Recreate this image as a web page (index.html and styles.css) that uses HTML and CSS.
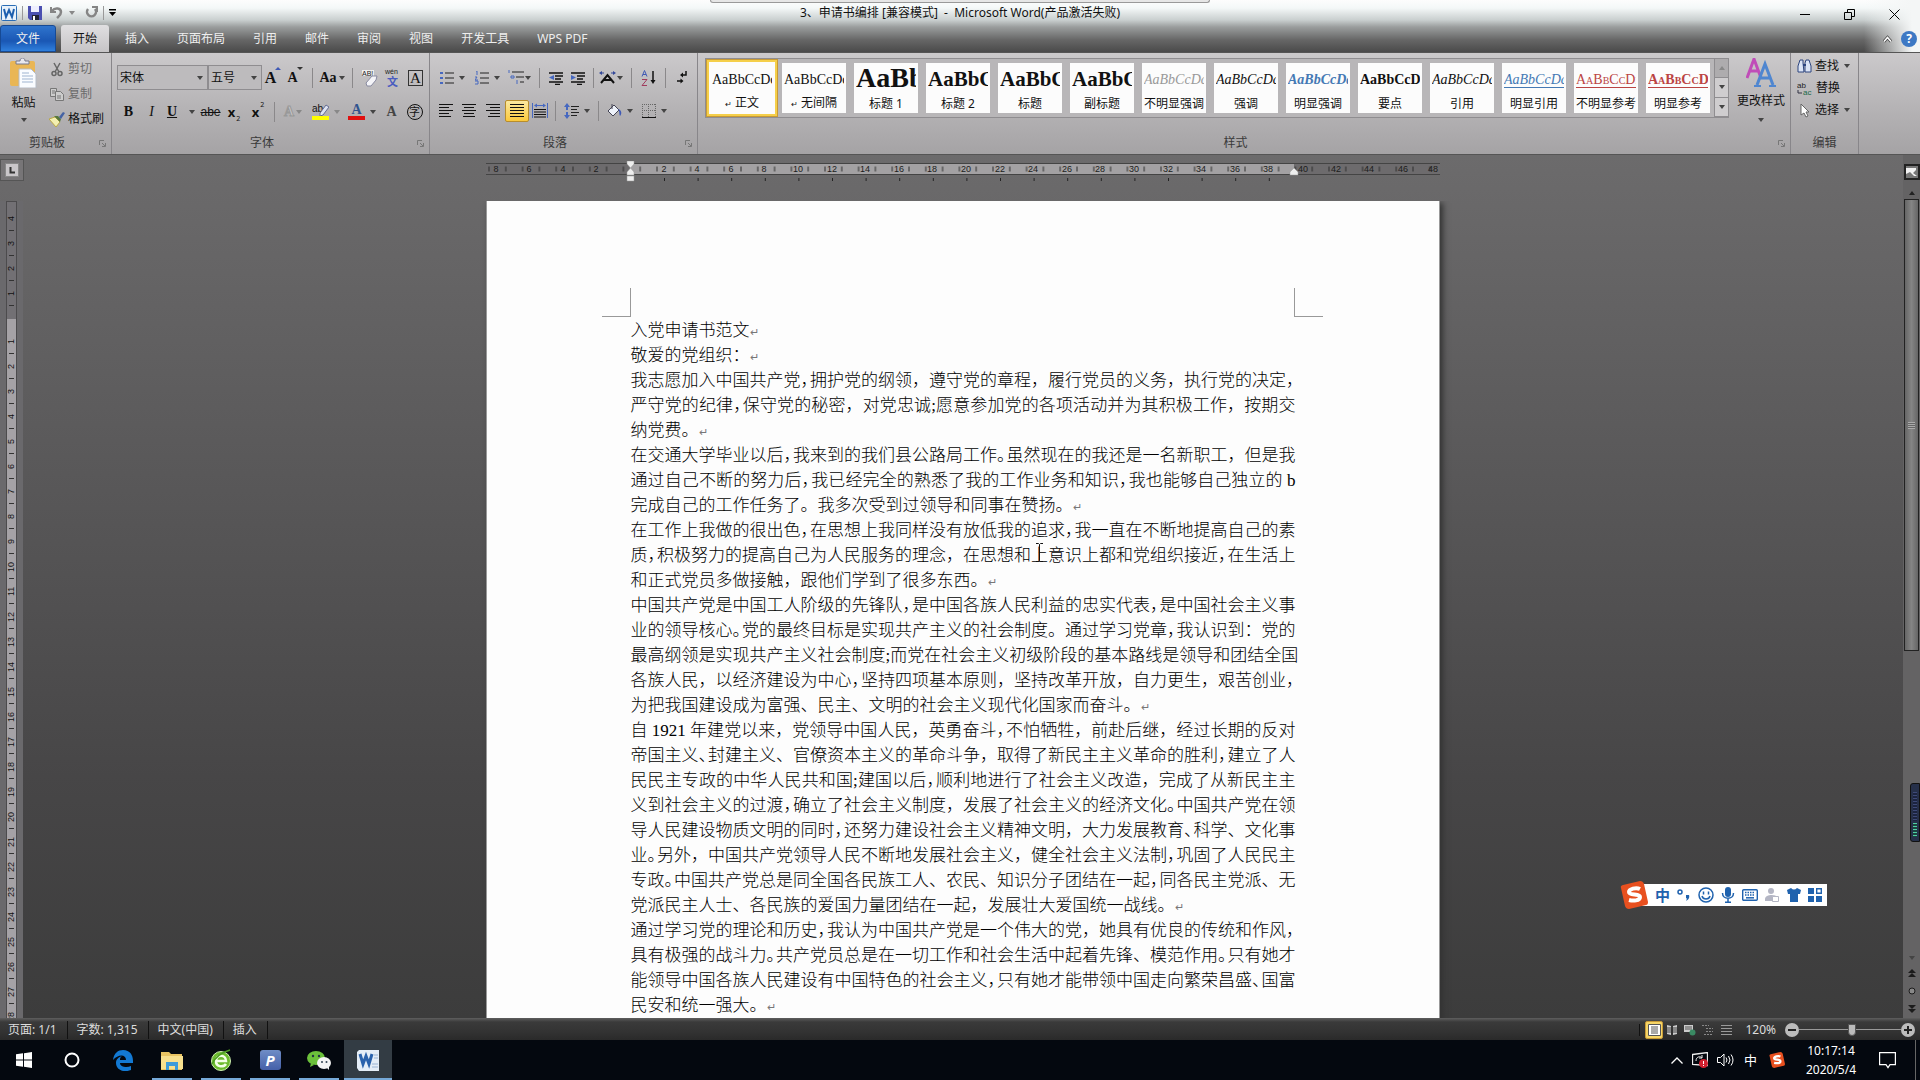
FILE: index.html
```html
<!DOCTYPE html>
<html lang="zh-CN">
<head>
<meta charset="utf-8">
<title>3、申请书编排 [兼容模式] - Microsoft Word</title>
<link rel="stylesheet" href="styles.css">
</head>
<body>
<div class="desktop">
<header class="top">
  <div class="shelf"></div>
  <div class="titlebar">
    <div class="quick">
      <svg width="16" height="16" viewBox="0 0 16 16"><rect x=".5" y=".5" width="15" height="15" rx="1" fill="#e8f2fb" stroke="#2a6db5"/><path d="M3 4l2 8 3-7 3 7 2-8" fill="none" stroke="#1d5fae" stroke-width="2"/></svg>
      <span class="qsep"></span>
      <button aria-label="保存"><svg width="14" height="14" viewBox="0 0 14 14"><path d="M0 0h14v14H2l-2-2z" fill="#4a4fb0"/><path d="M3 0h8v6H3z" fill="#eef"/><path d="M4 9h7v5H4z" fill="#223"/><path d="M5 10h2v4H5z" fill="#fff"/></svg></button>
      <button aria-label="撤消"><svg width="13" height="13" viewBox="0 0 13 13"><path d="M1 1v5h5" fill="none" stroke="#858585" stroke-width="2"/><path d="M2 5c3-4 9-3 9 1 0 3-2 4-4 6" fill="none" stroke="#858585" stroke-width="2.5"/></svg></button>
      <span class="caret dim"></span>
      <button aria-label="重复"><svg width="13" height="13" viewBox="0 0 13 13"><path d="M3 3a4.500 4.500 0 1 0 7 0" fill="none" stroke="#858585" stroke-width="2.500"/><path d="M7 1h5v5" fill="none" stroke="#858585" stroke-width="2"/></svg></button>
      <span class="qsep"></span>
      <button aria-label="自定义快速访问工具栏"><svg width="7" height="7" viewBox="0 0 7 7"><path d="M0 0h7v1.500H0zM0 3h7L3.500 7z" fill="#000"/></svg></button>
    </div>
    <h1 class="title">3、申请书编排 [兼容模式] &nbsp;- &nbsp;Microsoft Word(产品激活失败)</h1>
    <div class="winbtns">
      <button aria-label="最小化"><svg width="10" height="10" viewBox="0 0 10 10"><path d="M0 5.500h10" stroke="#000"/></svg></button>
      <button aria-label="还原"><svg width="11" height="11" viewBox="0 0 11 11"><path d="M.5 3.500h7v7h-7zM3.500 3.500v-3h7v7h-3" fill="none" stroke="#000"/></svg></button>
      <button aria-label="关闭"><svg width="11" height="11" viewBox="0 0 11 11"><path d="M.5.5l10 10M10.500.5l-10 10" stroke="#000"/></svg></button>
    </div>
  </div>
  <nav class="tabs">
    <button class="tab file">文件</button>
    <button class="tab on">开始</button>
    <button class="tab">插入</button>
    <button class="tab">页面布局</button>
    <button class="tab">引用</button>
    <button class="tab">邮件</button>
    <button class="tab">审阅</button>
    <button class="tab">视图</button>
    <button class="tab">开发工具</button>
    <button class="tab">WPS PDF</button>
    <span class="grow"></span>
    <button class="mini" aria-label="折叠功能区"><svg width="9" height="8" viewBox="0 0 9 8"><path d="M1 6.500L4.500 2.500 8 6.500" fill="none" stroke="#444" stroke-width="3"/><path d="M1 6.500L4.500 2.500 8 6.500" fill="none" stroke="#fff" stroke-width="1.500"/></svg></button>
    <button class="help" aria-label="帮助">?</button>
  </nav>
</header>

<section class="ribbon">
  <div class="group clip">
    <div class="gbody">
      <button class="paste"><svg width="27" height="30" viewBox="0 0 27 30"><rect x="0" y="3" width="25" height="25" rx="2" fill="#e9b655"/><path d="M6 6V3h4c0-4 5-4 5 0h4v3z" fill="#e8e8ee" stroke="#77788c"/><path d="M9 11h12l5 5v14H9z" fill="#fafcff" stroke="#b6bcc6"/><path d="M12 15h7M12 18h11M12 21h11M12 24h11" stroke="#9fb4d0"/></svg><span>粘贴</span><i class="caret"></i></button>
      <div class="stack">
        <button class="sm off"><svg width="16" height="16" viewBox="0 0 16 16"><path d="M5 2l5 9M11 2l-5 9" stroke="#666" stroke-width="1.500"/><circle cx="5" cy="12.500" r="2" fill="none" stroke="#666" stroke-width="1.500"/><circle cx="11" cy="12.500" r="2" fill="none" stroke="#666" stroke-width="1.500"/></svg>剪切</button>
        <button class="sm off"><svg width="16" height="16" viewBox="0 0 16 16"><path d="M1.500 2.500h6v8h-6z" fill="#ccc" stroke="#777"/><path d="M6.500 5.500h5l3 3v6h-8z" fill="#ccc" stroke="#777"/><path d="M8 10h4M8 12h4M3 5h3M3 7h3" stroke="#777"/></svg>复制</button>
        <button class="sm"><svg width="16" height="16" viewBox="0 0 16 16"><path d="M0 8l6-2 5 5-4 5z" fill="#f3efb0" stroke="#b9a947"/><path d="M5 5l6 6 1-3-3-3z" fill="#58783f"/><path d="M10 6l4-5 2 1-4 6z" fill="#4462a4"/></svg>格式刷</button>
      </div>
    </div>
    <div class="glabel"><span>剪贴板</span><svg class="launch" width="7" height="7" viewBox="0 0 7 7"><path d="M.5 5V.5H5M3 3l3 3M6.500 3v3.500H3" fill="none" stroke="#777"/></svg></div>
  </div>

  <div class="group font">
    <div class="gbody rows">
      <div class="row">
        <label class="combo wide"><input type="text" value="宋体" aria-label="字体"><i class="caret"></i></label>
        <label class="combo"><input type="text" value="五号" aria-label="字号"><i class="caret"></i></label>
        <button class="tb w22 ser big" aria-label="增大字体">A<sup class="up"></sup></button>
        <button class="tb w22 ser" aria-label="缩小字体">A<sup class="dn"></sup></button>
        <span class="sep"></span>
        <button class="tb w28 ser">Aa<i class="caret"></i></button>
        <span class="sep"></span>
        <button class="tb w23" aria-label="清除格式"><svg width="17" height="18" viewBox="0 0 17 18"><path d="M1 1h12v6H1z" fill="#eee"/><text x="1" y="7" font-family="Liberation Sans" font-size="7" fill="#222">AB!</text><path d="M5 14l6-7h5l-1 4-5 6H6z" fill="#f4f4f8" stroke="#888aa0"/></svg></button>
        <button class="tb w23" aria-label="拼音指南"><svg width="17" height="19" viewBox="0 0 17 19"><text x="1" y="6" font-family="Liberation Sans" font-size="7" fill="#222">wén</text><text x="3" y="18" font-family="Noto Sans CJK SC" font-size="11" font-weight="700" fill="#4a5cc0">文</text></svg></button>
        <button class="tb w23" aria-label="字符边框"><span class="boxa">A</span></button>
      </div>
      <div class="row r2">
        <button class="tb w23 ser">B</button>
        <button class="tb w23 ser ital">I</button>
        <button class="tb w36 ser"><u>U</u><i class="caret"></i></button>
        <button class="tb w23 strike">abe</button>
        <button class="tb w24 bold">x<sub>2</sub></button>
        <button class="tb w24 bold">x<sup>2</sup></button>
        <span class="sep s8"></span>
        <button class="tb w30 ser ghost">A<i class="caret dim"></i></button>
        <button class="tb w36" aria-label="突出显示"><svg width="17" height="17" viewBox="0 0 17 17"><text x="0" y="9" font-family="Liberation Sans" font-size="10" fill="#111">ab</text><path d="M8 10l6-8 3 2-6 8-3 1z" fill="#dde3f2" stroke="#666c90"/><path d="M0 13h17v4H0z" fill="#ff0"/></svg><i class="caret dim"></i></button>
        <button class="tb w36" aria-label="字体颜色"><span class="fcolor">A</span><i class="caret"></i></button>
        <button class="tb w23 ser grey">A</button>
        <button class="tb w23"><span class="circ">字</span></button>
      </div>
    </div>
    <div class="glabel"><span>字体</span><svg class="launch" width="7" height="7" viewBox="0 0 7 7"><path d="M.5 5V.5H5M3 3l3 3M6.500 3v3.500H3" fill="none" stroke="#777"/></svg></div>
  </div>

  <div class="group para">
    <div class="gbody rows">
      <div class="row">
        <button class="tb w35" aria-label="项目符号"><svg width="14" height="14" viewBox="0 0 14 14"><path d="M0 1h3v2H0zM0 6h3v2H0zM0 11h3v2H0z" fill="#4668c0"/><path d="M5 2h9M5 7h9M5 12h9" stroke="#222"/></svg><i class="caret"></i></button>
        <button class="tb w35" aria-label="编号"><svg width="14" height="14" viewBox="0 0 14 14"><path d="M1 0h1v4M0 6h2l-2 3h3M0 10h3v3H0" fill="none" stroke="#4668c0"/><path d="M5 2h9M5 7h9M5 12h9" stroke="#222"/></svg><i class="caret"></i></button>
        <button class="tb w28 snug" aria-label="多级列表"><svg width="16" height="15" viewBox="0 0 16 15"><path d="M1 0v3M3 6h3v2H3zM9 10v4" fill="none" stroke="#4668c0"/><path d="M4 2h12M8 7h8M12 12h4" stroke="#222"/></svg><i class="caret"></i></button>
        <span class="sep"></span>
        <button class="tb w22" aria-label="减少缩进"><svg width="14" height="14" viewBox="0 0 14 14"><path d="M0 2h14M6 5h8M6 8h6M0 11h14M6 13.500h5" stroke="#111" stroke-width="1.500"/><path d="M5 4v5L0 6.500z" fill="#4668c0"/></svg></button>
        <button class="tb w22" aria-label="增加缩进"><svg width="14" height="14" viewBox="0 0 14 14"><path d="M0 2h14M6 5h8M6 8h6M0 11h14M6 13.500h5" stroke="#111" stroke-width="1.500"/><path d="M0 4v5l5-2.500z" fill="#4668c0"/></svg></button>
        <span class="sep s8"></span>
        <button class="tb w28 snug" aria-label="中文版式"><svg width="17" height="14" viewBox="0 0 17 14"><path d="M2 12l6.500-8L15 12M5 9h7" fill="none" stroke="#111" stroke-width="2"/><path d="M0 2l3-2v1.500h2v1H3V4zM17 2l-3-2v1.500h-2v1h2V4z" fill="#33489a"/></svg><i class="caret"></i></button>
        <span class="sep"></span>
        <button class="tb w22" aria-label="排序"><svg width="15" height="16" viewBox="0 0 15 16"><path d="M1 6.500L3.500.5 6 6.500M2 4.500h3" fill="none" stroke="#3f59b5"/><path d="M1 9.500h5l-5 6h5" fill="none" stroke="#a03a5c"/><path d="M12 1v11" stroke="#111" stroke-width="1.500"/><path d="M9.500 10h5L12 14z" fill="#111"/></svg></button>
        <span class="sep"></span>
        <button class="tb w22" aria-label="显示编辑标记"><svg width="10" height="13" viewBox="0 0 10 13"><path d="M9 0v4H5M0 10h4" fill="none" stroke="#111" stroke-width="1.500"/><path d="M6 1.500v5L3 4zM3.500 7.500v5l3-2.500z" fill="#111"/></svg></button>
      </div>
      <div class="row r3">
        <button class="tb w22" aria-label="左对齐"><svg width="14" height="13" viewBox="0 0 14 13"><path d="M0 .5h14M0 3.500h10M0 6.500h14M0 9.500h10M0 12.500h12" stroke="#111"/></svg></button>
        <button class="tb w24" aria-label="居中"><svg width="14" height="13" viewBox="0 0 14 13"><path d="M0 .5h14M2 3.500h10M0 6.500h14M2 9.500h10M1 12.500h12" stroke="#111"/></svg></button>
        <button class="tb w24" aria-label="右对齐"><svg width="14" height="13" viewBox="0 0 14 13"><path d="M0 .5h14M4 3.500h10M0 6.500h14M4 9.500h10M2 12.500h12" stroke="#111"/></svg></button>
        <button class="tb w24 hot" aria-label="两端对齐"><svg width="14" height="13" viewBox="0 0 14 13"><path d="M0 .5h14M0 3.500h14M0 6.500h14M0 9.500h14M0 12.500h14" stroke="#111"/></svg></button>
        <button class="tb w22" aria-label="分散对齐"><svg width="16" height="15" viewBox="0 0 16 15"><path d="M.5 0v15M15.500 0v15M3 2.500h10" stroke="#4668c0"/><path d="M5 .5l-3 2 3 2zM11 .5l3 2-3 2z" fill="#4668c0"/><path d="M2 6.500h12M2 9h12M2 11.500h12M2 14h12" stroke="#111"/></svg></button>
        <span class="sep s8"></span>
        <button class="tb w35" aria-label="行距"><svg width="15" height="16" viewBox="0 0 15 16"><path d="M3 0l3 4H4v3H2V4H0zM3 16l3-4H4V9H2v3H0z" fill="#4668c0"/><path d="M7 3.500h8M7 6.500h6M7 9.500h8M7 12.500h6" stroke="#222"/></svg><i class="caret"></i></button>
        <span class="sep s8"></span>
        <button class="tb w35" aria-label="底纹"><svg width="15" height="14" viewBox="0 0 15 14"><path d="M1 7l6-6 5 5-6 6z" fill="#eef2fa" stroke="#445"/><path d="M5 0v5" stroke="#445"/><path d="M11 5c4 1 4 5 2 7-1-2 0-4-2-7z" fill="#3f59b5"/></svg><i class="caret"></i></button>
        <button class="tb w35" aria-label="边框"><svg width="14" height="14" viewBox="0 0 14 14"><path d="M.5 0v13M6.500 0v13M13.500 0v13M0 .5h14M0 6.500h14" stroke="#666" stroke-dasharray="1 1"/><path d="M0 13.500h14" stroke="#111"/></svg><i class="caret"></i></button>
      </div>
    </div>
    <div class="glabel"><span>段落</span><svg class="launch" width="7" height="7" viewBox="0 0 7 7"><path d="M.5 5V.5H5M3 3l3 3M6.500 3v3.500H3" fill="none" stroke="#777"/></svg></div>
  </div>

  <div class="group styles">
    <div class="gbody">
      <div class="gallery">
        <button class="style sel"><b class="pv">AaBbCcDd</b><span><small>↵</small> 正文</span></button>
        <button class="style"><b class="pv">AaBbCcDd</b><span><small>↵</small> 无间隔</span></button>
        <button class="style"><b class="pv h1">AaBb</b><span>标题 1</span></button>
        <button class="style"><b class="pv h2">AaBbC</b><span>标题 2</span></button>
        <button class="style"><b class="pv h2">AaBbC</b><span>标题</span></button>
        <button class="style"><b class="pv h2">AaBbC</b><span>副标题</span></button>
        <button class="style"><b class="pv it pale">AaBbCcDd</b><span>不明显强调</span></button>
        <button class="style"><b class="pv it">AaBbCcDd</b><span>强调</span></button>
        <button class="style"><b class="pv it blue">AaBbCcDd</b><span>明显强调</span></button>
        <button class="style"><b class="pv strong">AaBbCcD</b><span>要点</span></button>
        <button class="style"><b class="pv it">AaBbCcDd</b><span>引用</span></button>
        <button class="style"><b class="pv it blue line">AaBbCcDd</b><span>明显引用</span></button>
        <button class="style"><b class="pv caps red line">AaBbCcDd</b><span>不明显参考</span></button>
        <button class="style"><b class="pv caps red line strong">AaBbCcDd</b><span>明显参考</span></button>
        <div class="gscroll"><button disabled aria-label="上一行"><i class="caret flip dim"></i></button><button aria-label="下一行"><i class="caret"></i></button><button aria-label="其他"><i class="caret more"></i></button></div>
      </div>
      <button class="change"><svg width="30" height="29" viewBox="0 0 30 29"><path d="M1 20L8 1l7 19M4 13h8" fill="none" stroke="#c04db8" stroke-width="3"/><path d="M11 27l8-21 8 21M14 20h10" fill="none" stroke="#4f86d0" stroke-width="3"/><path d="M8 28h7M23 28h7" stroke="#4f86d0" stroke-width="2"/></svg><span>更改样式</span><i class="caret"></i></button>
    </div>
    <div class="glabel"><span>样式</span><svg class="launch" width="7" height="7" viewBox="0 0 7 7"><path d="M.5 5V.5H5M3 3l3 3M6.500 3v3.500H3" fill="none" stroke="#777"/></svg></div>
  </div>

  <div class="group edit">
    <div class="gbody stack">
      <button class="sm"><svg width="15" height="14" viewBox="0 0 15 14"><path d="M3 1h3v3l1 9H1V7zM9 1h3l2 6v6H8V4z" fill="#dbe4f5" stroke="#2c447e"/><path d="M6 6h3" stroke="#2c447e" stroke-width="2"/></svg>查找<i class="caret"></i></button>
      <button class="sm"><svg width="16" height="15" viewBox="0 0 16 15"><text x="0" y="7" font-family="Liberation Sans" font-size="8" fill="#222">ab</text><text x="6" y="14" font-family="Liberation Sans" font-size="8" fill="#1a6a4a">ac</text><path d="M1 9v3h4" fill="none" stroke="#334"/></svg>替换</button>
      <button class="sm"><svg width="15" height="15" viewBox="0 0 15 15"><path d="M4 1v11l3-2 2 4 2-1-2-4h3z" fill="#fff" stroke="#666"/></svg>选择<i class="caret"></i></button>
    </div>
    <div class="glabel"><span>编辑</span></div>
  </div>
</section>

<main class="work">
  <button class="tabsel" aria-label="制表符"><svg width="14" height="14" viewBox="0 0 14 14"><path d="M.5.5h13v13H.5z" fill="#c9c6c9" stroke="#888"/><path d="M5.500 4v5.500H10" fill="none" stroke="#333" stroke-width="2"/></svg></button>
  <div class="hruler">
    <svg width="954" height="22" viewBox="0 0 954 22">
      <defs><pattern id="ticks" x="2" y="0" width="16.800" height="12" patternUnits="userSpaceOnUse"><path d="M1 3.500v5" stroke="#2c2c2c"/></pattern>
      <pattern id="marks" x="10" y="0" width="33.600" height="22" patternUnits="userSpaceOnUse"><path d="M.5 17v3" stroke="#222"/></pattern></defs>
      <path d="M0 2h954v12H0z" fill="#6d6b6d"/><path d="M144 2h664v12H144z" fill="#a3a1a3"/>
      <path d="M0 2.500h954M0 13.500h954" stroke="#444"/>
      <g transform="translate(0 2)"><path d="M0 0h954v12H0z" fill="url(#ticks)"/></g>
      <path d="M170 16h620v5H170z" fill="url(#marks)"/>
      <g class="rnum"><text x="10" y="11">8</text><text x="43" y="11">6</text><text x="77" y="11">4</text><text x="110" y="11">2</text><text x="178" y="11">2</text><text x="211" y="11">4</text><text x="245" y="11">6</text><text x="278" y="11">8</text><text x="312" y="11">10</text><text x="346" y="11">12</text><text x="379" y="11">14</text><text x="413" y="11">16</text><text x="446" y="11">18</text><text x="480" y="11">20</text><text x="514" y="11">22</text><text x="547" y="11">24</text><text x="581" y="11">26</text><text x="614" y="11">28</text><text x="648" y="11">30</text><text x="682" y="11">32</text><text x="715" y="11">34</text><text x="749" y="11">36</text><text x="782" y="11">38</text><text x="817" y="11">40</text><text x="850" y="11">42</text><text x="883" y="11">44</text><text x="917" y="11">46</text><text x="947" y="11">48</text></g>
      <path d="M141 0h7v3l-3.500 4-3.500-4zM141 14v-3l3.500-4 3.500 4v3zM141 15h7v5h-7zM804 14v-3l4-4 4 4v3z" fill="#eee" stroke="#999" stroke-width=".5"/>
    </svg>
  </div>
  <div class="vruler">
    <div class="vtop"><span>4</span><span>3</span><span>2</span><span>1</span></div>
    <div class="vmain"><span>1</span><span>2</span><span>3</span><span>4</span><span>5</span><span>6</span><span>7</span><span>8</span><span>9</span><span>10</span><span>11</span><span>12</span><span>13</span><span>14</span><span>15</span><span>16</span><span>17</span><span>18</span><span>19</span><span>20</span><span>21</span><span>22</span><span>23</span><span>24</span><span>25</span><span>26</span><span>27</span><span>28</span></div>
  </div>
  <div class="canvas">
    <article class="page">
      <div class="corners"><span class="corner"></span><span class="corner r"></span></div>
      <div class="text">
        <p><span class="end">入党申请书范文</span></p>
        <p><span class="end">敬爱的党组织：</span></p>
        <p><span>我志愿加入中国共产党<em>，</em>拥护党的纲领，遵守党的章程，履行党员的义务，执行党的决定<em>，</em></span>
        <span>严守党的纪律<em>，</em>保守党的秘密，对党忠诚;愿意参加党的各项活动并为其积极工作，按期交</span>
        <span class="end">纳党费。</span></p>
        <p><span>在交通大学毕业以后<em>，</em>我来到的我们县公路局工作<em>。</em>虽然现在的我还是一名新职工，但是我</span>
        <span>通过自己不断的努力后<em>，</em>我已经完全的熟悉了我的工作业务和知识<em>，</em>我也能够自己独立的 <b>b</b></span>
        <span class="end">完成自己的工作任务了。我多次受到过领导和同事在赞扬。</span></p>
        <p><span>在工作上我做的很出色<em>，</em>在思想上我同样没有放低我的追求<em>，</em>我一直在不断地提高自己的素</span>
        <span>质<em>，</em>积极努力的提高自己为人民服务的理念，在思想和上意识上都和党组织接近<em>，</em>在生活上</span>
        <span class="end">和正式党员多做接触，跟他们学到了很多东西。</span></p>
        <p><span>中国共产党是中国工人阶级的先锋队<em>，</em>是中国各族人民利益的忠实代表<em>，</em>是中国社会主义事</span>
        <span>业的领导核心<em>。</em>党的最终目标是实现共产主义的社会制度。通过学习党章<em>，</em>我认识到：党的</span>
        <span>最高纲领是实现共产主义社会制度;而党在社会主义初级阶段的基本路线是领导和团结全国</span>
        <span>各族人民，以经济建设为中心<em>，</em>坚持四项基本原则，坚持改革开放，自力更生，艰苦创业<em>，</em></span>
        <span class="end">为把我国建设成为富强、民主、文明的社会主义现代化国家而奋斗。</span></p>
        <p><span>自 <b>1921</b> 年建党以来，党领导中国人民，英勇奋斗<em>，</em>不怕牺牲，前赴后继，经过长期的反对</span>
        <span>帝国主义<em>、</em>封建主义、官僚资本主义的革命斗争，取得了新民主主义革命的胜利<em>，</em>建立了人</span>
        <span>民民主专政的中华人民共和国;建国以后<em>，</em>顺利地进行了社会主义改造，完成了从新民主主</span>
        <span>义到社会主义的过渡<em>，</em>确立了社会主义制度，发展了社会主义的经济文化<em>。</em>中国共产党在领</span>
        <span>导人民建设物质文明的同时<em>，</em>还努力建设社会主义精神文明，大力发展教育<em>、</em>科学、文化事</span>
        <span>业<em>。</em>另外，中国共产党领导人民不断地发展社会主义，健全社会主义法制<em>，</em>巩固了人民民主</span>
        <span>专政<em>。</em>中国共产党总是同全国各民族工人、农民、知识分子团结在一起<em>，</em>同各民主党派、无</span>
        <span class="end">党派民主人士、各民族的爱国力量团结在一起，发展壮大爱国统一战线。</span></p>
        <p><span>通过学习党的理论和历史<em>，</em>我认为中国共产党是一个伟大的党，她具有优良的传统和作风<em>，</em></span>
        <span>具有极强的战斗力<em>。</em>共产党员总是在一切工作和社会生活中起着先锋、模范作用<em>。</em>只有她才</span>
        <span>能领导中国各族人民建设有中国特色的社会主义<em>，</em>只有她才能带领中国走向繁荣昌盛<em>、</em>国富</span>
        <span class="end">民安和统一强大。</span></p>
      </div>
    </article>
    <svg class="ibeam" width="9" height="19" viewBox="0 0 9 19"><path d="M1 .5h2.500l1 1 1-1H8M4.500 1.500v16M1 18.500h2.500l1-1 1 1H8" fill="none" stroke="#111"/></svg>
    <div class="ime">
      <svg class="sogou" width="28" height="28" viewBox="0 0 28 28"><path d="M1 7Q0 5 3 4L20 0q3 0 4 3l4 18q0 3-2 3L9 28q-3 0-4-3z" fill="#e8501f"/><path d="M20 8c-4-2-11 0-11 3 0 4 11 1 11 5 0 4-7 4-11 3" fill="none" stroke="#fff" stroke-width="4"/></svg>
      <span class="zh">中</span>
      <svg width="14" height="14" viewBox="0 0 14 14"><circle cx="3" cy="4" r="2" fill="none" stroke="#1f62ae" stroke-width="1.500"/><path d="M9 7h3c1 3-1 5-3 6 1-2 1-3 0-3z" fill="#1f62ae"/></svg>
      <svg width="16" height="16" viewBox="0 0 16 16"><circle cx="8" cy="8" r="7" fill="none" stroke="#1f62ae" stroke-width="1.500"/><path d="M5.500 4.500v3M10.500 4.500v3M4 9c1 4 7 4 8 0" fill="none" stroke="#1f62ae" stroke-width="1.500"/></svg>
      <svg width="14" height="16" viewBox="0 0 14 16"><rect x="4" y="0" width="6" height="10" rx="3" fill="#1f62ae"/><path d="M1.500 6c0 7 11 7 11 0M7 12v3M4 15.300h6" fill="none" stroke="#1f62ae" stroke-width="1.500"/></svg>
      <svg width="16" height="12" viewBox="0 0 16 12"><rect x=".7" y=".7" width="14.600" height="10.600" rx="1" fill="none" stroke="#1f62ae" stroke-width="1.400"/><path d="M3 3.500h10M3 6h10" stroke="#1f62ae" stroke-width="1.500" stroke-dasharray="1.500 1"/><path d="M4 8.800h8" stroke="#1f62ae" stroke-width="1.500"/></svg>
      <svg width="15" height="16" viewBox="0 0 15 16"><circle cx="6" cy="4" r="3" fill="#b4b6c4"/><path d="M0 12c0-5 11-5 12-2v4H0z" fill="#b4b6c4"/><path d="M7.500 9.500h6v5h-6z" fill="#fff" stroke="#b4b6c4"/></svg>
      <svg width="14" height="14" viewBox="0 0 14 14"><path d="M4 0q3 3 6 0l4 2-1 4h-2v8H3V6H1L0 2z" fill="#1f62ae"/></svg>
      <svg width="14" height="14" viewBox="0 0 14 14"><path d="M0 0h6v6H0zM0 8h6v6H0zM8 8h6v6H8z" fill="#1f62ae"/><path d="M8.700.7h4.600v4.600H8.700z" fill="none" stroke="#1f62ae" stroke-width="1.400"/></svg>
    </div>
  </div>
  <div class="vscroll">
    <button class="rtoggle" aria-label="标尺"><svg width="11" height="8" viewBox="0 0 11 8"><path d="M0 0h10v2L7 5l4 3H8L4 4 0 6z" fill="#f2f2f2"/></svg></button>
    <i class="caret flip"></i>
    <div class="thumb"><i></i></div>
    <span class="grow"></span>
    <i class="caret"></i>
    <svg width="8" height="9" viewBox="0 0 8 9"><path d="M4 0l4 4H0zM4 4l4 4H0z" fill="#1c1c1c"/></svg>
    <svg width="8" height="8" viewBox="0 0 8 8"><circle cx="4" cy="4" r="3" fill="#888" stroke="#1c1c1c"/></svg>
    <svg width="8" height="9" viewBox="0 0 8 9"><path d="M4 5L0 1h8zM4 9L0 5h8z" fill="#1c1c1c"/></svg>
    <div class="meter"><i></i><i class="lit"></i></div>
  </div>
</main>

<footer class="status">
  <button>页面: 1/1</button><button>字数: 1,315</button><button>中文(中国)</button><button>插入</button>
  <span class="grow"></span>
  <span class="vsep"></span>
  <button class="view act" aria-label="页面视图"><svg width="13" height="12" viewBox="0 0 13 12"><path d="M.5.5h12v11H.5z" fill="#fff" stroke="#555"/><path d="M3 3h7M3 5h7M3 7h7M3 9h7" stroke="#555"/></svg></button>
  <button class="view" aria-label="阅读版式"><svg width="12" height="12" viewBox="0 0 12 12"><path d="M1 1l4 1v9l-4-1zM11 1L7 2v9l4-1z" fill="#ccc"/><path d="M1 4h4M1 6h4M1 8h4M7 4h4M7 6h4M7 8h4" stroke="#444"/></svg></button>
  <button class="view" aria-label="Web 版式"><svg width="12" height="12" viewBox="0 0 12 12"><path d="M0 1h9v7H0z" fill="#ccc"/><path d="M1 3h7M1 5h7" stroke="#555"/><circle cx="8.500" cy="8.500" r="3" fill="#3a8a63"/></svg></button>
  <button class="view" aria-label="大纲"><svg width="12" height="12" viewBox="0 0 12 12"><path d="M0 1.500h7M4 4.500h7M4 7.500h7M2 10.500h9" stroke="#888" stroke-dasharray="2 1"/></svg></button>
  <button class="view" aria-label="草稿"><svg width="11" height="12" viewBox="0 0 11 12"><path d="M0 1.500h11M0 4.500h11M0 7.500h11M0 10.500h11" stroke="#999"/></svg></button>
  <button class="zoom">120%</button>
  <button class="round" aria-label="缩小"><svg width="14" height="14" viewBox="0 0 14 14"><circle cx="7" cy="7" r="7" fill="#bbb"/><path d="M3 7h8" stroke="#222" stroke-width="2"/></svg></button>
  <input class="slider" type="range" min="0" max="100" value="52" aria-label="显示比例">
  <button class="round" aria-label="放大"><svg width="14" height="14" viewBox="0 0 14 14"><circle cx="7" cy="7" r="7" fill="#bbb"/><path d="M3 7h8M7 3v8" stroke="#222" stroke-width="2"/></svg></button>
</footer>

<nav class="taskbar">
  <button class="task" aria-label="开始菜单"><svg width="16" height="16" viewBox="0 0 16 16"><path d="M0 2.300l7-1v6.200H0zM8 1.200L16 0v7.500H8zM0 8.500h7v6.200l-7-1zM8 8.500h8V16l-8-1.200z" fill="#fff"/></svg></button>
  <button class="task" aria-label="Cortana"><svg width="16" height="16" viewBox="0 0 16 16"><circle cx="8" cy="8" r="6.500" fill="none" stroke="#fff" stroke-width="2"/></svg></button>
  <div class="apps">
  <button class="task" aria-label="Edge"><svg width="20" height="21" viewBox="0 0 20 21"><path d="M0 10C1 3 5 0 10 0c7 0 10 5 10 11v2H7c0 4 7 5 11 3v4C11 23 3 20 3 13c0-4 3-6 6-7-2 1-2 3-2 4h6c0-6-8-6-13 0z" fill="#1379d3"/></svg></button>
  <button class="task run" aria-label="资源管理器"><svg width="22" height="19" viewBox="0 0 22 19"><path d="M0 1h8l2 2h11v16H0z" fill="#e9c463"/><path d="M0 5h22v13H0z" fill="#f8e08e"/><path d="M5 19v-8h12v8h-3v-4H8v4z" fill="#3d9bd9"/></svg></button>
  <button class="task run" aria-label="360 浏览器"><svg width="22" height="22" viewBox="0 0 22 22"><circle cx="11" cy="12" r="9.500" fill="#6dbb2e" stroke="#cdeeb0"/><path d="M6 12h10c0-7-10-7-10 0s8 6 10 3" fill="none" stroke="#f4ffe8" stroke-width="2.500"/><path d="M2 15C6 7 13 3 20 1" fill="none" stroke="#4d9d22" stroke-width="1.500"/></svg></button>
  <button class="task run" aria-label="P 应用"><span class="papp">P</span></button>
  <button class="task run" aria-label="微信"><svg width="24" height="19" viewBox="0 0 24 19"><ellipse cx="9" cy="7" rx="9" ry="7" fill="#6cc13b"/><path d="M4 12l-1 4 4-2z" fill="#6cc13b"/><circle cx="6" cy="5" r="1.200" fill="#234"/><circle cx="12" cy="5" r="1.200" fill="#234"/><ellipse cx="17" cy="12" rx="7" ry="6" fill="#f4f4f4"/><path d="M19 16l3 3v-4z" fill="#f4f4f4"/><circle cx="15" cy="11" r="1" fill="#345"/><circle cx="19.500" cy="11" r="1" fill="#345"/></svg></button>
  <button class="task run cur" aria-label="Word"><svg width="22" height="21" viewBox="0 0 22 21"><path d="M2 0h20v21H2L0 18V2z" fill="#e4edf7"/><path d="M3 4l3 10 3-8 3 8 3-10" fill="none" stroke="#2a62ac" stroke-width="3"/><path d="M15 14h6M15 17h6M17 5h4M17 8h4" stroke="#9bb4d4"/></svg></button>
  </div>
  <span class="grow"></span>
  <div class="tray">
    <svg width="12" height="7" viewBox="0 0 12 7"><path d="M.5 6.500L6 1l5.500 5.500" fill="none" stroke="#fff" stroke-width="1.300"/></svg>
    <svg width="16" height="16" viewBox="0 0 16 16"><path d="M.5 2.500L15.500.5v13l-15-1z" fill="none" stroke="#eee" stroke-width="1.300"/><path d="M4 9c0-5 5-5 6-3M10 3v3H7" fill="none" stroke="#eee"/><circle cx="11.500" cy="11.500" r="4.500" fill="#d2202f"/><path d="M11.500 9v3M11.500 13v1" stroke="#fff"/></svg>
    <svg width="17" height="14" viewBox="0 0 17 14"><path d="M.5 4.500h3L7 1v12L3.500 9.500h-3z" fill="none" stroke="#fff"/><path d="M9 4.500q2 2.500 0 5M11.500 3q3 4 0 8M14 1.500q4 5.500 0 11" fill="none" stroke="#fff"/></svg>
    <span class="lang">中</span>
    <svg width="16" height="16" viewBox="0 0 28 28"><path d="M1 7Q0 5 3 4L20 0q3 0 4 3l4 18q0 3-2 3L9 28q-3 0-4-3z" fill="#e8501f"/><path d="M20 8c-4-2-11 0-11 3 0 4 11 1 11 5 0 4-7 4-11 3" fill="none" stroke="#fff" stroke-width="4"/></svg>
  </div>
  <div class="clock"><time>10:17:14</time><time>2020/5/4</time></div>
  <button class="note" aria-label="通知"><svg width="17" height="17" viewBox="0 0 17 17"><path d="M.6.600h15.800v12H11l-2 3-2-3H.6z" fill="none" stroke="#fff" stroke-width="1.200"/></svg></button>
</nav>
</div>
</body>
</html>
```
FILE: styles.css
```css
* { box-sizing: border-box; }
body { margin: 0; font: 12px/16px "Noto Sans", "Noto Sans CJK SC", sans-serif; color: #111; }
button, input { font: inherit; color: inherit; border: 0; padding: 0; margin: 0; background: none; }
button { display: flex; align-items: center; justify-content: center; white-space: nowrap; }
svg { display: block; flex: none; }
.grow { flex: 1; }
.desktop { height: 100vh; display: flex; flex-direction: column; overflow: hidden; }

.caret { width: 0; height: 0; flex: none; border: 3px solid transparent; border-top: 4px solid #444; border-bottom: 0; }
.caret.dim { border-top-color: #888; }
.caret.flip { border-top: 0; border-bottom: 4px solid #222; }
.caret.flip.dim { border-bottom-color: #888; }

/* title bar and tabs */
.top { position: relative; flex: none; background: linear-gradient(90deg, transparent calc(100% - 56px), #f4f6f6 calc(100% - 8px)), linear-gradient(#fdfdfd 0, #f4f8f8 8px, #c9cfcf 20px, #9a9d9d 27px, #666 40px, #4a4a4a 52px); border-bottom: 1px solid #555; }
.shelf { position: absolute; top: 0; left: 37%; right: 37%; height: 3px; background: #e6e6e6; border: solid #999; border-width: 0 1px 1px; border-radius: 0 0 4px 4px; }
.titlebar { display: grid; grid-template-columns: 1fr auto 1fr; align-items: center; height: 25px; }
.quick { display: flex; align-items: center; gap: 8px; padding-left: 1px; }
.qsep { width: 1px; height: 14px; background: #999; margin: 0 -3px; }
.quick .caret { margin: 0 2px 0 -2px; }
.title { margin: 0; font-size: 12px; line-height: 24px; font-weight: 400; }
.winbtns { display: flex; justify-content: flex-end; padding: 3px 3px 0 0; }
.winbtns button { width: 45px; height: 22px; }
.tabs { display: flex; height: 27px; align-items: stretch; color: #eee; }
.tab { padding: 0 14px; color: #eee; }
.tab.file { background: linear-gradient(#2f74cd, #1a57b4 60%, #2f7fdc); border: 1px solid #174a94; border-radius: 3px 3px 0 0; padding: 0 15px; margin-right: 5px; }
.tab.on { background: linear-gradient(#e0dfe1, #c6c4c6); color: #111; border-radius: 3px 3px 0 0; padding: 0 12px; margin-right: 2px; }
.mini { width: 20px; }
.tabs::after { content: ""; width: 3px; }
.help { width: 16px; height: 16px; align-self: center; margin-left: 4px; border-radius: 8px; background: #3d78c4; color: #fff; font-weight: 700; }

/* ribbon */
.ribbon { flex: none; display: flex; height: 102px; padding-right: 61px; background: linear-gradient(#cbc9cb, #b3b1b3 60%, #a5a3a5); border-bottom: 1px solid #555; }
.group { flex: none; display: flex; flex-direction: column; border-right: 1px solid #88868a; }
.gbody { flex: 1; display: flex; }
.glabel { height: 22px; line-height: 22px; text-align: center; color: #3a3a3a; display: flex; }
.glabel span { flex: 1; }
.launch { margin: 8px 5px 0; }
.clip { width: 112px; }
.paste { width: 47px; flex-direction: column; justify-content: flex-start; padding-top: 5px; gap: 7px; }
.stack { display: flex; flex-direction: column; }
.sm { height: 25px; gap: 3px; justify-content: flex-start; margin-left: 2px; padding-top: 6px; }
.sm.off { color: #6b6b6b; }
.font { width: 318px; }
.para { width: 268px; }
.rows { flex-direction: column; padding: 12px 5px 0; }
.row { display: flex; height: 25px; align-items: center; }
.r2 { margin-top: 9px; }
.r3 { margin-top: 8px; }
.combo { display: flex; align-items: center; width: 54px; height: 25px; border: 1px solid #8f8d90; background: #bdbbbd; padding: 0 4px 0 2px; }
.combo.wide { width: 91px; }
.combo input { flex: 1; min-width: 0; }
.sep { width: 12px; height: 20px; flex: none; background: linear-gradient(#8a888a, #8a888a) center / 1px 100% no-repeat; }
.sep.s8 { width: 8px; }
.tb { height: 22px; gap: 5px; flex: none; font-size: 12px; }
.snug { gap: 1px; }
.w22 { width: 22px; } .w23 { width: 23px; } .w24 { width: 24px; } .w28 { width: 28px; }
.w30 { width: 30px; } .w35 { width: 35px; } .w36 { width: 36px; }
.ser { font: bold 14px/20px "Liberation Serif", serif; gap: 2px; }
.w36.ser { gap: 12px; }
.ser.big { font-size: 16px; }
.ital { font-style: italic; font-weight: 400; }
.bold { font-weight: 700; gap: 1px; font-size: 13px; }
.tb sub, .tb sup { font-size: 7px; line-height: 8px; align-self: flex-end; font-weight: 400; }
.tb sup { align-self: flex-start; }
.tb .up, .tb .dn { border: 3px solid transparent; border-bottom: 3px solid #3f59b5; border-top: 0; margin-left: -3px; }
.tb .dn { border-top: 3px solid #333; border-bottom: 0; }
.strike { text-decoration: line-through; font-family: "Liberation Sans", sans-serif; }
.ghost { color: #c9c7c9; -webkit-text-stroke: 1px #999; }
.grey { color: #444; }
.boxa { font: 15px/14px "Liberation Serif", serif; border: 1px solid #333; padding: 0 1px; }
.fcolor { font: bold 14px/13px "Liberation Serif", serif; color: #31548f; border-bottom: 4px solid #e01010; padding: 0 3px; }
.circ { width: 16px; height: 16px; border: 1px solid #111; border-radius: 8px; line-height: 14px; font-size: 11px; text-align: center; }
.hot { background: linear-gradient(#fbe9a0, #fbc93c); border: 1px solid #b88d2c; border-radius: 2px; }

.styles { flex: 1; min-width: 0; }
.styles .gbody { padding: 5px 5px 0 7px; justify-content: space-between; }
.gallery { display: flex; height: 60px; overflow: hidden; border: 1px solid #8f8d90; background: #b8b6b8; min-width: 0; }
.style { flex: none; width: 72px; height: 58px; border: 4px solid #b8b6b8; background: #fcfcfc; flex-direction: column; justify-content: flex-end; font-size: 12px; overflow: hidden; }
.style.sel { border-color: #f5cf4a; outline: 1px solid #c79a36; outline-offset: -1px; border-width: 3px; padding: 1px; }
.style span { line-height: 18px; }
.style small { font-size: 8px; }
.pv { width: 60px; height: 32px; overflow: hidden; text-align: left; font: 14px/34px "Liberation Serif", serif; color: #111; }
.pv.h1 { font-size: 28px; line-height: 30px; font-weight: 700; }
.pv.h2 { font-size: 21px; line-height: 32px; font-weight: 700; }
.pv.it { font-style: italic; }
.pv.pale { color: #999; }
.pv.blue { color: #4479b4; font-weight: 700; }
.pv.blue.line { font-weight: 400; }
.pv.strong { font-weight: 700; }
.pv.caps { font-variant: small-caps; }
.pv.red { color: #bb4443; }
.pv.line { text-decoration: underline; text-underline-offset: 3px; }
.gscroll { width: 14px; display: flex; flex-direction: column; border-left: 1px solid #8f8d90; }
.gscroll button { flex: 1; background: #cfcdcf; border-bottom: 1px solid #8f8d90; }
.gscroll button:disabled { background: #aeacae; }
.more { box-shadow: 0 -6px 0 -4px #444; }
.change { flex-direction: column; justify-content: flex-start; gap: 6px; }
.change .caret { margin-top: 3px; }
.edit { width: 68px; }
.edit .gbody { padding-left: 5px; }
.edit .sm { height: 22px; padding-top: 4px; margin-left: 1px; }
.edit .sm .caret { margin-left: 2px; }

/* document area */
.work { flex: 1; min-height: 0; display: grid; grid-template: 46px 1fr / 23px 1fr 17px; background: linear-gradient(#6c6b6c, #5a595a 35%, #474647 72%, #3c3c3c); overflow: hidden; }
.tabsel { width: 24px; height: 22px; margin-top: 4px; border: 1px solid #555; background: #777577; }
.hruler { display: flex; justify-content: center; padding-top: 6px; min-width: 0; overflow: hidden; }
.rnum { font: 9px "Liberation Sans", sans-serif; fill: #1c1c1c; text-anchor: middle; }
.vruler { grid-column: 1; grid-row: 2; min-height: 0; overflow: hidden; padding-left: 6px; background: #6a696c; display: flex; flex-direction: column; }
.vtop, .vmain { width: 11px; flex: none; border: 1px solid #4c4b4d; border-width: 0 1px; font: 9px/9px "Liberation Sans", sans-serif; }
.vtop { background: #727074; padding-bottom: 13px; border-top-width: 1px; padding-top: 4px; }
.vmain { background: #a5a2a6; padding-top: 10px; }
.vruler span { display: flex; align-items: center; justify-content: center; height: 25px; writing-mode: vertical-rl; transform: rotate(180deg); background: linear-gradient(#333, #333) center top / 5px 1px no-repeat; }
.canvas { grid-column: 2; grid-row: 2; position: relative; min-height: 0; overflow: hidden; display: flex; justify-content: center; align-items: flex-start; }
.page { width: 952px; flex: none; min-height: 1347px; background: #fdfdfd; padding-top: 87px; box-shadow: 0 0 0 1px #999, 3px 3px 6px 1px #333; }
.corners { display: flex; justify-content: space-between; padding: 0 116px 0 115px; }
.corner { width: 29px; height: 29px; border: solid #999; border-width: 0 1px 1px 0; }
.corner.r { border-width: 0 0 1px 1px; }
.text { width: 665px; margin: 1px auto 0; font: 17px/25px "Liberation Serif", "Noto Sans CJK SC", serif; font-weight: 300; color: #000; }
.text p { margin: 0; }
.text p span { display: block; height: 25px; white-space: nowrap; text-align: justify; text-align-last: justify; }
.text p .end { text-align-last: left; }
.text .end::after { content: "↵"; font-size: 11px; line-height: 1px; color: #777; }
.text em { font-style: normal; font-feature-settings: "halt"; margin-right: 1px; }
.text b { font-weight: 400; }
.ibeam { position: absolute; left: 1012px; top: 342px; }
.ime { position: absolute; right: 76px; top: 683px; height: 22px; display: flex; align-items: center; gap: 7px; padding: 0 5px 0 0; background: linear-gradient(90deg, transparent 19px, #fff 19px); }
.ime .zh { color: #1f62ae; font-weight: 700; font-size: 15px; line-height: 20px; }

.vscroll { grid-column: 3; grid-row: 1 / 3; position: relative; background: #646364; display: flex; flex-direction: column; align-items: center; gap: 9px; padding: 9px 0 5px; min-height: 0; }
.vscroll .flip { margin-top: 2px; }
.rtoggle { width: 16px; height: 16px; border: 2px solid #222; background: #777; flex: none; }
.thumb { width: 15px; height: 452px; margin-top: -5px; flex: none; border: 1px solid #222; background: linear-gradient(90deg, #666, #858585 50%, #666); display: flex; align-items: center; justify-content: center; }
.thumb i { width: 7px; height: 7px; background: repeating-linear-gradient(#aaa 0 1px, #666 1px 2px); }
.meter { position: absolute; right: 0; top: 628px; width: 10px; height: 59px; background: #26304a; border: 1px solid #111; border-radius: 3px 0 0 3px; padding: 8px 2px 4px; display: flex; flex-direction: column; gap: 2px; }
.meter i { flex: 2; background: repeating-linear-gradient(#3e4a78 0 1px, #1c2440 1px 3px); }
.meter .lit { flex: 1; background: repeating-linear-gradient(#4fd0a4 0 1px, #1c4440 1px 3px); }

/* status bar */
.status { flex: none; height: 22px; display: flex; align-items: center; background: linear-gradient(#555, #3a3a3a 3px, #333 60%, #2a2a2a); border-top: 1px solid #5a5a5a; color: #ddd; padding: 0 5px 0 8px; }
.status > button { height: 18px; padding-right: 10px; margin-right: 9px; border-right: 1px solid #111; }
.vsep { width: 1px; height: 12px; background: #111; margin-right: 5px; }
.status > .view { border: 0; padding: 0; margin: 0; width: 18px; height: 18px; }
.status > .act { background: #f6d567; border: 1px solid #c79a36; border-radius: 2px; }
.status > .zoom { border: 0; padding: 0; margin: 0 9px 0 10px; }
.status > .round { border: 0; padding: 0; margin: 0; }
.slider { appearance: none; width: 102px; height: 14px; background: linear-gradient(#999, #999) center / 100% 1px no-repeat; }
.slider::-webkit-slider-thumb { appearance: none; width: 8px; height: 12px; background: #bbb; border: 1px solid #555; border-radius: 0 0 4px 4px; }

/* taskbar */
.taskbar { flex: none; height: 40px; display: flex; align-items: stretch; background: #04080f; color: #fff; }
.task { width: 48px; height: 40px; }
.apps { display: flex; gap: 1px; margin-left: 3px; }
.run { background: linear-gradient(#76a9d8, #76a9d8) center bottom / 40px 2px no-repeat; }
.cur { background: linear-gradient(#76a9d8, #76a9d8) center bottom / 48px 2px no-repeat, #333c44; }
.papp { width: 21px; height: 20px; border-radius: 3px; background: linear-gradient(#6f8dc6, #4560a8); font: italic bold 15px/20px "Noto Sans", sans-serif; text-align: center; }
.tray { display: flex; align-items: center; gap: 9px; }
.lang { font-size: 13px; margin: 0 3px 0 1px; }
.clock { width: 92px; display: flex; flex-direction: column; align-items: center; justify-content: center; line-height: 19px; }
.note { width: 20px; margin-right: 18px; }
.taskbar::after { content: ""; width: 1px; background: #666; margin-right: 4px; }
```
